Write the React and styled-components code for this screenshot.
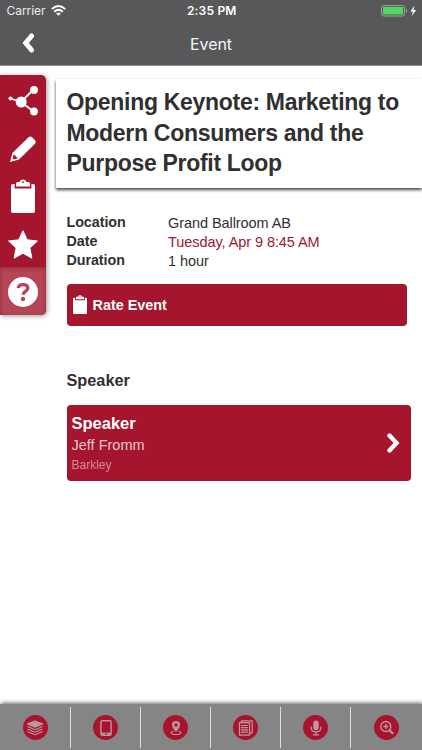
import React from 'react'
import styled, { createGlobalStyle } from 'styled-components';

const GlobalStyle = createGlobalStyle`
  * {
    box-sizing: border-box;
  }
  body {
    margin: 0;
    background: #fff;
    font-family: "Liberation Sans", Arial, sans-serif;
    color: #303032;
  }
  svg {
    display: block;
    flex: none;
  }
`;

const Screen = styled.div`
  display: flex;
  flex-direction: column;
  width: 422px;
  height: 750px;
  overflow: hidden;
`;

const Header = styled.header`
  height: 66px;
  background: #58585a;
  border-bottom: 1px solid #929293;
  color: #fff;
  font-family: Inter, sans-serif;
`;

const StatusBar = styled.div`
  display: grid;
  grid-template-columns: 1fr auto 1fr;
  align-items: center;
  height: 21px;
  padding: 0 5px 0 6.5px;
  font-size: 12px;
`;

const Carrier = styled.div`
  display: flex;
  align-items: center;
  gap: 6px;
  letter-spacing: -0.05px;
  color: #ececec;
`;

const Clock = styled.div`
  font-weight: 600;
  font-size: 12px;
  letter-spacing: 0.2px;
`;

const Battery = styled.div`
  display: flex;
  justify-content: flex-end;
`;

const NavBar = styled.div`
  display: grid;
  grid-template-columns: 60px 1fr 60px;
  align-items: center;
  height: 44px;
`;

const BackButton = styled.a`
  padding-left: 22px;
`;

const NavTitle = styled.div`
  padding-top: 1px;
  text-align: center;
  font-size: 16px;
  font-weight: 400;
  letter-spacing: -0.1px;
  color: #f4f4f4;
`;

const Body = styled.main`
  display: flex;
  flex: 1;
  align-items: flex-start;
  gap: 10px;
  padding-top: 9px;
`;

const SideMenu = styled.nav`
  width: 46px;
  height: 240px;
  flex: none;
  display: flex;
  flex-direction: column;
  overflow: hidden;
  background: #a5152d;
  border-radius: 0 5px 5px 0;
  box-shadow: 1px 1px 5px rgba(0, 0, 0, 0.4);
`;

const SideItem = styled.a`
  display: flex;
  align-items: center;
  justify-content: center;
  height: ${props => props.$height}px;
  padding-top: 2px;
  background: ${props => props.$active ? '#b64558' : 'transparent'};
  box-shadow: ${props => props.$active ? 'inset 0 1px 4px rgba(70, 0, 15, 0.4)' : 'none'};
`;

const Content = styled.div`
  flex: 1;
  padding-top: 4px;
`;

const TitleCard = styled.div`
  height: 109px;
  padding: 8px 0 0 10.5px;
  background: #fff;
  box-shadow: 0 2px 3px rgba(0, 0, 0, 0.72);
`;

const Title = styled.h1`
  margin: 0;
  font-size: 23px;
  line-height: 30.5px;
  font-weight: 700;
  letter-spacing: -0.3px;
  white-space: nowrap;
`;

const Details = styled.dl`
  display: grid;
  grid-template-columns: 101.5px 1fr;
  grid-auto-rows: 19.3px;
  margin: 24.5px 0 0 10.5px;
  line-height: 19px;
`;

const Label = styled.dt`
  font-size: 14.3px;
  font-weight: 700;
  letter-spacing: -0.05px;
`;

const Value = styled.dd`
  margin: 0;
  padding-top: 1px;
  font-size: 14.5px;
  letter-spacing: -0.07px;
  color: ${props => props.$accent ? '#a5152d' : '#303032'};
`;

const RateButton = styled.a`
  display: flex;
  align-items: center;
  gap: 6px;
  width: 340.5px;
  height: 42px;
  margin: 13.5px 0 0 10.5px;
  padding-left: 6px;
  border-radius: 4px;
  background: #a5152d;
  color: #fff;
  font-size: 14.4px;
  font-weight: 700;
`;

const SectionTitle = styled.h2`
  margin: 44px 0 0 10.5px;
  font-size: 16.3px;
  line-height: 20px;
  font-weight: 700;
`;

const SpeakerCard = styled.a`
  display: flex;
  align-items: center;
  justify-content: space-between;
  width: 344.5px;
  height: 76px;
  margin: 15px 0 0 10.5px;
  padding: 0 11px 0 5px;
  border-radius: 4px;
  background: #a5152d;
`;

const SpeakerRole = styled.div`
  font-size: 16.5px;
  line-height: 22px;
  font-weight: 700;
  color: #fff;
`;

const SpeakerName = styled.div`
  font-size: 14.5px;
  line-height: 23px;
  color: #edc4cb;
`;

const SpeakerCompany = styled.div`
  font-size: 12px;
  line-height: 17px;
  color: #d08a96;
`;

const TabBar = styled.footer`
  display: grid;
  grid-template-columns: 71px repeat(4, 70px) 1fr;
  height: 46px;
  padding: 3px 0 2px;
  background: #858585;
  box-shadow: 1px -1px 4px rgba(0, 0, 0, 0.6);
`;

const Tab = styled.a`
  display: flex;
  align-items: center;
  justify-content: center;
  border-right: ${props => props.$last ? 'none' : '1px solid #dedede'};
`;

const TabCircle = styled.span`
  display: flex;
  align-items: center;
  justify-content: center;
  width: 25px;
  height: 25px;
  border-radius: 50%;
  background: #a8142e;
  color: #b8999d;
`;

function ClipboardIcon({ width, height, hole }) {
  return (
    <svg width={width} height={height} viewBox="0 0 24 34" preserveAspectRatio="none">
      <path fill="#fff" d="M2 5H3.600V9.500H20.400V5H22Q24 5 24 7V32Q24 34 22 34H2Q0 34 0 32V7Q0 5 2 5Z" />
      <path fill="#fff" d="M5 7.600V4.500Q5 3 6.500 3H8.500Q9.500 .6 12 .6T15.500 3H17.500Q19 3 19 4.500V7.600Z" />
      <circle cx="12" cy="3.200" r=".9" fill={hole} />
    </svg>
  )
}

function Chevron({ left }) {
  return (
    <svg width="13" height="20" viewBox="0 0 13 20" fill="none" stroke="#fff" strokeWidth={left ? 5 : 4.4} strokeLinecap="round">
      <path d={left ? 'M9.500 3 3.700 10 9.500 17' : 'M2.500 2.500 9.500 10 2.500 17.500'} />
    </svg>
  )
}

function ShareIcon() {
  return (
    <svg width="30" height="30" viewBox="0 0 30 30" fill="#fff" stroke="#fff" strokeWidth="1.8">
      <path d="M2.500 12.500 13 16 25 4M13 16 25 25" fill="none" />
      <circle cx="2.500" cy="12.500" r="2" stroke="none" />
      <circle cx="13.200" cy="16" r="5.500" stroke="none" />
      <circle cx="26" cy="3.900" r="3.900" stroke="none" />
      <circle cx="26" cy="25.500" r="3.900" stroke="none" />
    </svg>
  )
}

function PencilIcon() {
  return (
    <svg width="26" height="26" viewBox="0 0 26 26" fill="#fff">
      <path d="M0 26 2.400 17 18.300 1.500Q20.300-.4 22.300 1.500L24.800 4Q26.700 6 24.800 8L9 23.500Z" />
      <path d="M3.700 18.200 7.800 22.300 4 23.500 2.700 22.200Z" fill="#a5152d" />
    </svg>
  )
}

function StarIcon() {
  return (
    <svg width="30" height="29" viewBox="0 0 30 29" fill="#fff" stroke="#fff" strokeWidth="1" strokeLinejoin="round">
      <path d="M15 .7 19.200 9.800 29.400 11 21.900 18 23.900 28.200 15 23.200 6.100 28.200 8.100 18 .6 11 10.800 9.800Z" />
    </svg>
  )
}

function HelpIcon() {
  return (
    <svg width="30" height="30" viewBox="0 0 30 30">
      <circle cx="15" cy="15" r="15" fill="#fff" />
      <path d="M10.300 11.200C10.500 8.600 12.300 7.600 14.900 7.600 17.800 7.600 19.800 9 19.800 11.300 19.800 14.300 15.200 14.200 15.200 17.800" fill="none" stroke="#b64558" strokeWidth="3.400" />
      <circle cx="15" cy="22" r="2.200" fill="#b64558" />
    </svg>
  )
}

function WifiIcon() {
  return (
    <svg width="15" height="11" viewBox="0 0 15 11" fill="none" stroke="#fff" strokeWidth="1.9">
      <path d="M.8 4.100Q7.500-2 14.200 4.100M3.200 6.700Q7.500 2.900 11.800 6.700" />
      <path d="M5.200 8.400Q7.500 6.500 9.800 8.400L7.500 10.800Z" fill="#fff" stroke="none" />
    </svg>
  )
}

function BatteryIcon() {
  return (
    <svg width="36" height="12" viewBox="0 0 36 12">
      <rect x=".6" y=".6" width="23" height="10.400" rx="2.200" fill="none" stroke="#a3a3a4" />
      <rect x="2" y="2" width="20.200" height="7.600" rx=".8" fill="#4cd964" />
      <path d="M25 4Q26.300 4.300 26.300 5.800T25 7.600Z" fill="#a3a3a4" />
      <path d="M33.500 .8 29.300 6.600H32L30.700 11 35.200 4.900H32.500Z" fill="#fff" />
    </svg>
  )
}

const tabs = [
  {
    name: 'layers',
    icon: <>
      <path d="M8 1 15.500 4 8 7.200 .5 4Z" fill="currentColor" />
      <path d="M.5 6.500 8 9.700 15.500 6.500M.5 9 8 12.200 15.500 9M.5 11.500 8 14.700 15.500 11.500" />
    </>,
  },
  {
    name: 'tablet',
    icon: <>
      <rect x="2.900" y=".8" width="10.200" height="14.400" rx="1.300" strokeWidth="1.400" />
      <path d="M3 13.600H13" strokeWidth="2" />
      <path d="M7 13.900H9" stroke="#a8142e" strokeWidth="1" />
    </>,
  },
  {
    name: 'map',
    icon: <>
      <path d="M8 12Q3.900 7.200 3.900 5A4.100 4.100 0 0 1 12.100 5Q12.100 7.200 8 12Z" fill="currentColor" stroke="none" />
      <circle cx="8" cy="4.900" r="1.700" fill="#a8142e" stroke="none" />
      <path d="M5.500 11Q3.200 11.500 3.200 12.700 3.400 14.500 8 14.500T12.800 12.700Q12.800 11.500 10.500 11" />
    </>,
  },
  {
    name: 'documents',
    icon: <>
      <path d="M1.500 2.600H11.500V15.200H1.500ZM3.500 2.600V.8H14.200V13.200H11.500" />
      <path d="M3 5.500H10M3 7.700H10M3 9.900H10M3 12.100H10" />
    </>,
  },
  {
    name: 'recordings',
    icon: <>
      <rect x="5.300" y=".6" width="5.400" height="9.600" rx="2.700" fill="currentColor" stroke="none" />
      <path d="M3.300 6.500V8Q3.300 11.900 8 11.900T12.700 8V6.500M8 12V14.500M5 14.900H11" />
    </>,
  },
  {
    name: 'search',
    icon: <>
      <circle cx="6.800" cy="6.500" r="5" strokeWidth="1.400" />
      <path d="M4.300 6.500H9.300M6.800 4V9" strokeWidth="1.400" />
      <path d="M10.400 10.100 14.200 13.800" strokeWidth="2.200" />
    </>,
  },
];

export default function App() {
  return (
    <>
      <GlobalStyle />
      <Screen>
        <Header>
          <StatusBar>
            <Carrier>Carrier <WifiIcon /></Carrier>
            <Clock>2:35 PM</Clock>
            <Battery><BatteryIcon /></Battery>
          </StatusBar>
          <NavBar>
            <BackButton><Chevron left /></BackButton>
            <NavTitle>Event</NavTitle>
          </NavBar>
        </Header>

        <Body>
          <SideMenu>
            <SideItem $height={50}><ShareIcon /></SideItem>
            <SideItem $height={46}><PencilIcon /></SideItem>
            <SideItem $height={48}><ClipboardIcon width={24} height={34} hole="#a5152d" /></SideItem>
            <SideItem $height={48}><StarIcon /></SideItem>
            <SideItem $height={48} $active><HelpIcon /></SideItem>
          </SideMenu>

          <Content>
            <TitleCard>
              <Title>
                Opening Keynote: Marketing to<br />
                Modern Consumers and the<br />
                Purpose Profit Loop
              </Title>
            </TitleCard>

            <Details>
              <Label>Location</Label>
              <Value>Grand Ballroom AB</Value>
              <Label>Date</Label>
              <Value $accent>Tuesday, Apr 9 8:45 AM</Value>
              <Label>Duration</Label>
              <Value>1 hour</Value>
            </Details>

            <RateButton>
              <ClipboardIcon width={14} height={19} hole="#a5152d" />
              Rate Event
            </RateButton>

            <SectionTitle>Speaker</SectionTitle>
            <SpeakerCard>
              <div>
                <SpeakerRole>Speaker</SpeakerRole>
                <SpeakerName>Jeff Fromm</SpeakerName>
                <SpeakerCompany>Barkley</SpeakerCompany>
              </div>
              <Chevron />
            </SpeakerCard>
          </Content>
        </Body>

        <TabBar>
          {tabs.map((tab, index) => (
            <Tab key={tab.name} $last={index === tabs.length - 1}>
              <TabCircle>
                <svg width="16" height="16" viewBox="0 0 16 16" fill="none" stroke="currentColor" strokeWidth="1.2">
                  {tab.icon}
                </svg>
              </TabCircle>
            </Tab>
          ))}
        </TabBar>
      </Screen>
    </>
  )
}
